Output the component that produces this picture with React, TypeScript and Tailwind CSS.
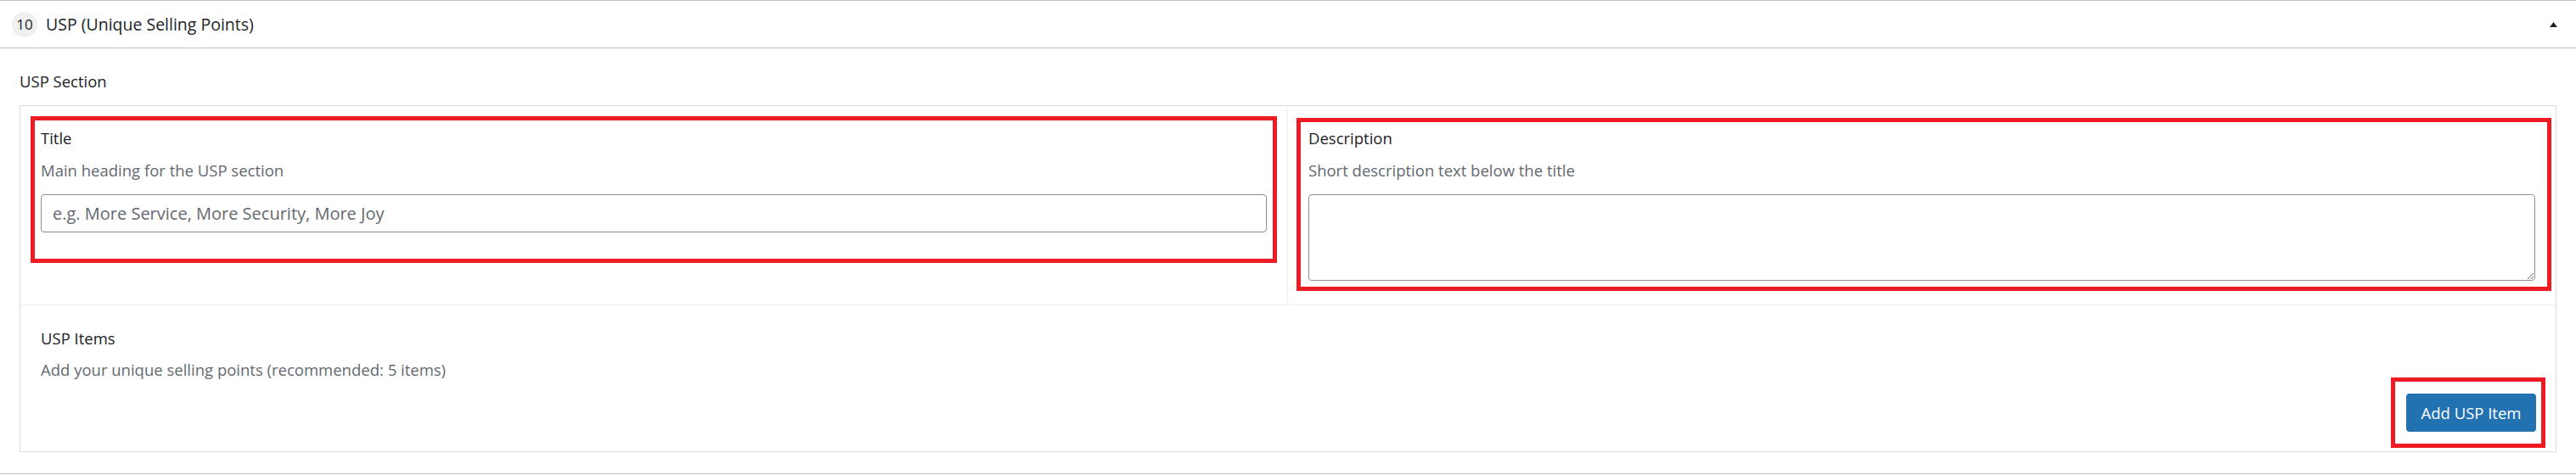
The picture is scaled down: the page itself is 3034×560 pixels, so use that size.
import React from "react";

interface FieldProps {
  label: string;
  hint: string;
  children: React.ReactNode;
}

const Field = ({ label, hint, children }: FieldProps) => {
  return (
    <div>
      <label className="block text-[#1d2327]">{label}</label>
      <p className="mt-[13px] text-[#646970]">{hint}</p>
      <div className="mt-[16px]">{children}</div>
    </div>
  );
};

const App = () => {
  return (
    <div className="w-full bg-white font-['Open_Sans',sans-serif] text-[18.5px] leading-[25px] text-[#1d2327]">
      <div className="border-b border-[#c3c4c7]">
        {/* panel header */}
        <div className="flex h-[57px] items-center justify-between border-y border-[#c3c4c7] pl-[14px] pr-[22px]">
          <div className="flex items-center gap-[10px]">
            <span className="flex size-[30px] items-center justify-center rounded-full bg-[#f0f0f1] text-[17px] text-[#1d2327]">
              10
            </span>
            <h2 className="text-[19.5px] font-normal">USP (Unique Selling Points)</h2>
          </div>
          <svg width="9" height="6" viewBox="0 0 9 6">
            <path d="M4.5 0L9 6H0z" fill="#1d2327" />
          </svg>
        </div>

        <div className="px-[23px] pb-[25px] pt-[26px]">
          <p className="mb-[16px]">USP Section</p>

          <div className="border border-[#dcdcde]">
            <div className="grid grid-cols-2 border-b border-[#f0f0f1]">
              <div className="border-r border-[#f0f0f1] p-[12px]">
                <div className="border-[5px] border-[#ed1c24] px-[7px] pb-[31px] pt-[8px]">
                  <Field label="Title" hint="Main heading for the USP section">
                    <input
                      type="text"
                      placeholder="e.g. More Service, More Security, More Joy"
                      className="block h-[45px] w-full rounded-[4px] border border-[#8c8f94] bg-white px-[13px] text-[20px] outline-none placeholder:text-[#646970]"
                    />
                  </Field>
                </div>
              </div>

              <div className="pb-[16px] pl-[10px] pr-[5px] pt-[14px]">
                <div className="border-[5px] border-[#ed1c24] pb-[7px] pl-[9px] pr-[14px] pt-[6px]">
                  <Field label="Description" hint="Short description text below the title">
                    <textarea className="block h-[102px] w-full rounded-[4px] border border-[#8c8f94] bg-white px-[12px] py-[6px] text-[20px] outline-none" />
                  </Field>
                </div>
              </div>
            </div>

            <div className="pb-[4px] pl-[24px] pr-[12px] pt-[26px]">
              <p className="text-[#1d2327]">USP Items</p>
              <p className="mt-[12px] text-[#646970]">
                Add your unique selling points (recommended: 5 items)
              </p>
              <div className="-mt-[3px] flex justify-end">
                <div className="border-[5px] border-[#ed1c24] pb-[14px] pl-[13px] pr-[6px] pt-[14px]">
                  <button
                    type="button"
                    className="h-[45px] w-[153px] rounded-[4px] bg-[#2271b1] text-[18.5px] text-white"
                  >
                    Add USP Item
                  </button>
                </div>
              </div>
            </div>
          </div>
        </div>
      </div>
    </div>
  );
};

export default App;
